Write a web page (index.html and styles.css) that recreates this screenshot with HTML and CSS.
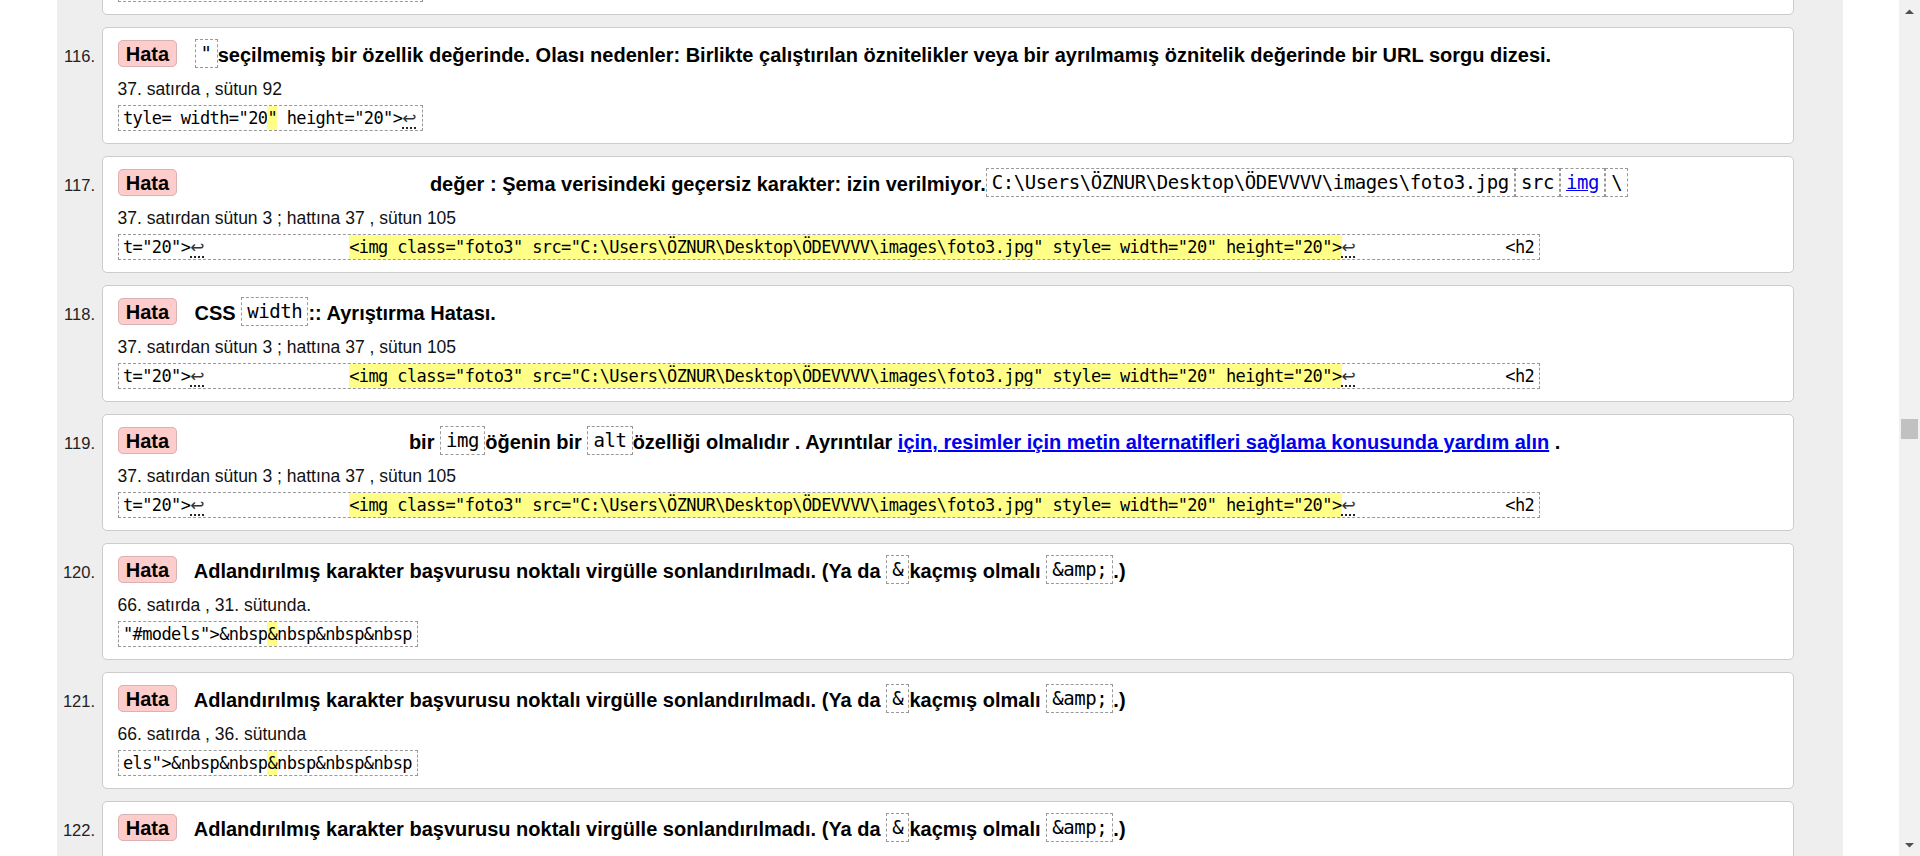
FILE: index.html
```html
<!DOCTYPE html>
<html lang="tr">
<head>
<meta charset="utf-8">
<title>Doğrulama sonuçları</title>
<link rel="stylesheet" href="styles.css">
</head>
<body>
<div class="window">
  <main class="page">
    <div class="results">
      <ol class="msgs">
        <li class="msg">
          <span class="num">115.</span>
          <div class="card">
            <p class="title"><strong class="badge">Hata</strong> <code class="c">=</code>seçilmemiş bir özellik değerinde. Olası nedenler: Birlikte çalıştırılan öznitelikler veya bir ayrılmamış öznitelik değerinde bir URL sorgu dizesi.</p>
            <p class="loc">37. satırda , sütun 80</p>
            <p class="extract"><code class="ext">tyle= width="20" height="20"&gt;<span class="ret">↩</span></code></p>
          </div>
        </li>
        <li class="msg">
          <span class="num">116.</span>
          <div class="card">
            <p class="title"><strong class="badge">Hata</strong> <code class="c">"</code>seçilmemiş bir özellik değerinde. Olası nedenler: Birlikte çalıştırılan öznitelikler veya bir ayrılmamış öznitelik değerinde bir URL sorgu dizesi.</p>
            <p class="loc">37. satırda , sütun 92</p>
            <p class="extract"><code class="ext">tyle= width="20<b class="hl">"</b> height="20"&gt;<span class="ret">↩</span></code></p>
          </div>
        </li>
        <li class="msg">
          <span class="num">117.</span>
          <div class="card">
            <p class="title"><strong class="badge">Hata</strong> <span class="gap gap-value"></span>değer : Şema verisindeki geçersiz karakter: izin verilmiyor.<code class="c">C:\Users\ÖZNUR\Desktop\ÖDEVVVV\images\foto3.jpg</code><code class="c">src</code><code class="c"><a href="#">img</a></code><code class="c">\</code></p>
            <p class="loc">37. satırdan sütun 3 ; hattına 37 , sütun 105</p>
            <p class="extract"><code class="ext">t="20"&gt;<span class="ret">↩</span>               <b class="hl">&lt;img class="foto3" src="C:\Users\ÖZNUR\Desktop\ÖDEVVVV\images\foto3.jpg" style= width="20" height="20"&gt;</b><span class="ret">↩</span>               <span class="nudge"></span>&lt;h2</code></p>
          </div>
        </li>
        <li class="msg">
          <span class="num">118.</span>
          <div class="card">
            <p class="title"><strong class="badge">Hata</strong> CSS <code class="c">width</code>:: Ayrıştırma Hatası.</p>
            <p class="loc">37. satırdan sütun 3 ; hattına 37 , sütun 105</p>
            <p class="extract"><code class="ext">t="20"&gt;<span class="ret">↩</span>               <b class="hl">&lt;img class="foto3" src="C:\Users\ÖZNUR\Desktop\ÖDEVVVV\images\foto3.jpg" style= width="20" height="20"&gt;</b><span class="ret">↩</span>               <span class="nudge"></span>&lt;h2</code></p>
          </div>
        </li>
        <li class="msg">
          <span class="num">119.</span>
          <div class="card">
            <p class="title"><strong class="badge">Hata</strong> <span class="gap gap-alt"></span>bir <code class="c">img</code>öğenin bir <code class="c">alt</code>özelliği olmalıdır . Ayrıntılar <a href="#">için, resimler için metin alternatifleri sağlama konusunda yardım alın</a> .</p>
            <p class="loc">37. satırdan sütun 3 ; hattına 37 , sütun 105</p>
            <p class="extract"><code class="ext">t="20"&gt;<span class="ret">↩</span>               <b class="hl">&lt;img class="foto3" src="C:\Users\ÖZNUR\Desktop\ÖDEVVVV\images\foto3.jpg" style= width="20" height="20"&gt;</b><span class="ret">↩</span>               <span class="nudge"></span>&lt;h2</code></p>
          </div>
        </li>
        <li class="msg">
          <span class="num">120.</span>
          <div class="card">
            <p class="title"><strong class="badge">Hata</strong> Adlandırılmış karakter başvurusu noktalı virgülle sonlandırılmadı. (Ya da <code class="c">&amp;</code>kaçmış olmalı <code class="c">&amp;amp;</code>.)</p>
            <p class="loc">66. satırda , 31. sütunda.</p>
            <p class="extract"><code class="ext">"#models"&gt;&amp;nbsp<b class="hl">&amp;</b>nbsp&amp;nbsp&amp;nbsp</code></p>
          </div>
        </li>
        <li class="msg">
          <span class="num">121.</span>
          <div class="card">
            <p class="title"><strong class="badge">Hata</strong> Adlandırılmış karakter başvurusu noktalı virgülle sonlandırılmadı. (Ya da <code class="c">&amp;</code>kaçmış olmalı <code class="c">&amp;amp;</code>.)</p>
            <p class="loc">66. satırda , 36. sütunda</p>
            <p class="extract"><code class="ext">els"&gt;&amp;nbsp&amp;nbsp<b class="hl">&amp;</b>nbsp&amp;nbsp&amp;nbsp</code></p>
          </div>
        </li>
        <li class="msg">
          <span class="num">122.</span>
          <div class="card">
            <p class="title"><strong class="badge">Hata</strong> Adlandırılmış karakter başvurusu noktalı virgülle sonlandırılmadı. (Ya da <code class="c">&amp;</code>kaçmış olmalı <code class="c">&amp;amp;</code>.)</p>
            <p class="loc">66. satırda , 41. sütunda</p>
            <p class="extract"><code class="ext">&gt;&amp;nbsp&amp;nbsp&amp;nbsp<b class="hl">&amp;</b>nbsp&amp;nbsp&amp;nbsp</code></p>
          </div>
        </li>
      </ol>
    </div>
  </main>
  <div class="scrollbar" aria-hidden="true">
    <div class="sb-btn"><svg width="21" height="21" viewBox="0 0 21 21"><polygon points="6,14 10.5,9.5 15,14" fill="#505050"/></svg></div>
    <div class="sb-track"><div class="sb-thumb"></div></div>
    <div class="sb-btn"><svg width="21" height="21" viewBox="0 0 21 21"><polygon points="6,8 15,8 10.5,12.5" fill="#505050"/></svg></div>
  </div>
</div>
</body>
</html>
```
FILE: styles.css
```css
* { box-sizing: border-box; }

html, body {
  margin: 0;
  padding: 0;
  height: 100%;
  overflow: hidden;
  background: #fff;
}

body {
  font-family: "Liberation Sans", Arial, sans-serif;
  color: #000;
}

.window {
  display: flex;
  height: 856px;
}

.page {
  flex: 1;
  min-width: 0;
  padding: 0 56px 0 57px;
}

.results {
  height: 100%;
  overflow: hidden;
  background: #eee;
}

.msgs {
  list-style: none;
  margin: -102.3px 0 0;
  padding: 0;
}

.msg {
  display: flex;
  align-items: baseline;
  margin-bottom: 12px;
}

.num {
  flex: none;
  width: 38px;
  margin-right: 6.5px;
  text-align: right;
  font-size: 16.5px;
  color: #222;
}

.card {
  flex: 1;
  min-width: 0;
  margin-right: 49px;
  background: #fff;
  border: 1px solid #ccc;
  border-radius: 5px;
  padding: 11px 15px 12px;
}

.title {
  margin: 0;
  font-size: 20px;
  font-weight: bold;
  line-height: 32px;
  white-space: nowrap;
}

.badge {
  padding: 2.3px 7.3px 0;
  margin-right: 11.5px;
  background: #fcc;
  border: 1px solid #d9b3b3;
  border-radius: 5px;
}

.gap { display: inline-block; }
.gap-value { width: 235.4px; }
.gap-alt { width: 214.4px; }

.c {
  display: inline-block;
  vertical-align: 2px;
  font-family: "DejaVu Sans Mono", monospace;
  font-weight: normal;
  font-size: 19px;
  letter-spacing: -0.44px;
  line-height: 27px;
  padding: 0 5.2px 0 5px;
  border: 1px dashed #999;
}

a {
  color: #00e;
  text-decoration: underline;
}

.loc {
  margin: 7px 0 0;
  font-size: 17.5px;
  line-height: 22px;
  color: #111;
}

.extract {
  display: flex;
  margin: 5px 0 0;
}

.ext {
  font-family: "DejaVu Sans Mono", monospace;
  font-size: 17px;
  letter-spacing: -0.6px;
  line-height: 24px;
  white-space: pre;
  padding: 0 5px 0 4.4px;
  border: 1px dashed #999;
  color: #000;
}

.hl {
  display: inline-block;
  font-weight: normal;
  background: #ff8;
}

.ret {
  font-family: "DejaVu Sans", sans-serif;
  letter-spacing: 0;
  color: #333;
  text-decoration: underline dotted #000;
  text-underline-offset: 4px;
}

.nudge {
  display: inline-block;
  width: 5px;
}

.scrollbar {
  flex: none;
  width: 21px;
  display: flex;
  flex-direction: column;
  background: #f1f1f1;
}

.sb-btn {
  flex: none;
  height: 21px;
}

.sb-btn svg { display: block; }

.sb-track { flex: 1; }

.sb-thumb {
  margin: 398px 2px 0;
  height: 20px;
  background: #c1c1c1;
}
```
